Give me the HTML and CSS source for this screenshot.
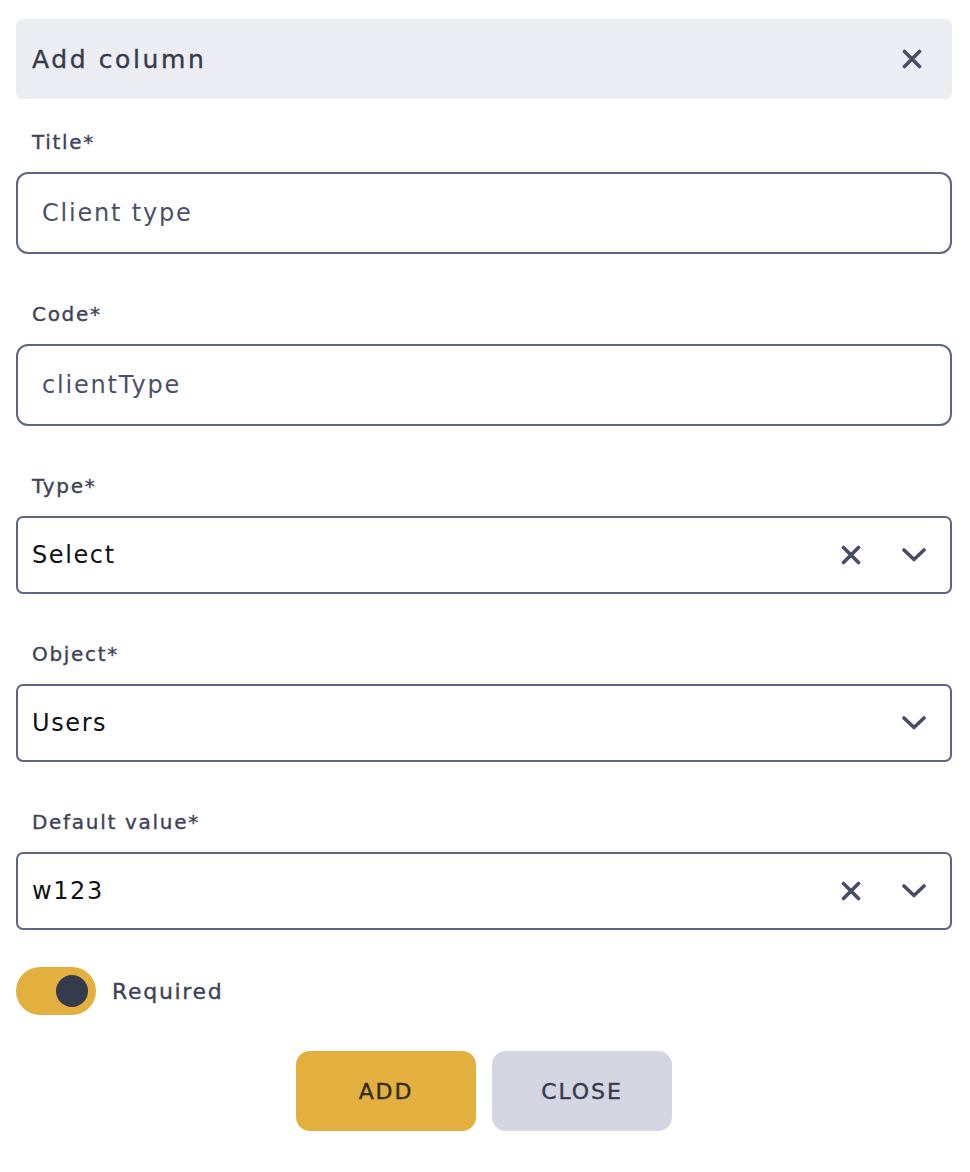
FILE: index.html
```html
<!DOCTYPE html>
<html lang="en">
<head>
    <meta name="viewport" content="width=device-width, initial-scale=1.0">
    <link rel="stylesheet" href="styles.css">
    <title>Add column</title>
</head>

<body>
    <div class="dialog">

        <div class="dialog-header">
            <span class="dialog-title">Add column</span>
            <svg class="icon-x" width="20" height="20" viewBox="0 0 20 20">
                <path d="M2.5 2.5 L17.5 17.5 M17.5 2.5 L2.5 17.5" />
            </svg>
        </div>

        <div class="field first">
            <label class="field-label">Title*</label>
            <div class="text-input">Client type</div>
        </div>

        <div class="field">
            <label class="field-label">Code*</label>
            <div class="text-input">clientType</div>
        </div>

        <div class="field">
            <label class="field-label">Type*</label>
            <div class="select">
                <span class="select-value">Select</span>
                <svg class="icon-x" width="20" height="20" viewBox="0 0 20 20"><path d="M2.5 2.5 L17.5 17.5 M17.5 2.5 L2.5 17.5" /></svg>
                <svg class="icon-chevron" width="24" height="14" viewBox="0 0 24 14"><path d="M2 2 L12 11.5 L22 2" /></svg>
            </div>
        </div>

        <div class="field">
            <label class="field-label">Object*</label>
            <div class="select">
                <span class="select-value">Users</span>
                <svg class="icon-chevron" width="24" height="14" viewBox="0 0 24 14"><path d="M2 2 L12 11.5 L22 2" /></svg>
            </div>
        </div>

        <div class="field">
            <label class="field-label">Default value*</label>
            <div class="select">
                <span class="select-value">w123</span>
                <svg class="icon-x" width="20" height="20" viewBox="0 0 20 20"><path d="M2.5 2.5 L17.5 17.5 M17.5 2.5 L2.5 17.5" /></svg>
                <svg class="icon-chevron" width="24" height="14" viewBox="0 0 24 14"><path d="M2 2 L12 11.5 L22 2" /></svg>
            </div>
        </div>

        <div class="switch-row">
            <div class="switch on"><div class="switch-knob"></div></div>
            <span class="switch-label">Required</span>
        </div>

        <div class="actions">
            <button class="btn btn-primary">ADD</button>
            <button class="btn btn-secondary">CLOSE</button>
        </div>
    </div>
</body>
</html>
```

FILE: styles.css
```css
* {
    box-sizing: border-box;
}

body {
    margin: 0px;
    background-color: white;
    font-family: "DejaVu Sans", "Noto Sans", sans-serif;
    color: #353a4d;
}

/* medium weight, DejaVu only ships book and bold */
.dialog-title, .field-label, .switch-label, .btn {
    -webkit-text-stroke: 0.35px currentColor;
}

.dialog {
    padding: 19px 18px 16px 16px;
}

.dialog-header {
    height: 80px;
    padding: 0px 30px 0px 16px;
    display: flex;
    align-items: center;
    justify-content: space-between;
    background-color: #ecedf2;
    border-radius: 7px;
}

.dialog-title {
    font-size: 25px;
    letter-spacing: 2.6px;
    color: #353a4d;
}

.icon-x path {
    fill: none;
    stroke: #474d66;
    stroke-width: 3.6;
    stroke-linecap: round;
}

.field {
    margin-top: 48px;
}

.field.first {
    margin-top: 31px;
}

.field-label {
    display: block;
    height: 24px;
    line-height: 24px;
    margin: 0px 0px 18px 16px;
    font-size: 20px;
    letter-spacing: 1.7px;
    color: #3d4257;
}

.text-input {
    height: 82px;
    padding: 0px 24px;
    display: flex;
    align-items: center;
    border: 2px solid #5d6585;
    border-radius: 12px;
    font-size: 24px;
    letter-spacing: 1.8px;
    color: #4a5068;
}

.select {
    height: 78px;
    padding: 0px 24px 0px 14px;
    display: flex;
    align-items: center;
    gap: 41px;
    border: 2px solid #5d6585;
    border-radius: 7px;
}

.select-value {
    flex: 1;
    font-size: 24px;
    letter-spacing: 1.6px;
    color: #111111;
}

.icon-chevron path {
    fill: none;
    stroke: #474d66;
    stroke-width: 3.6;
    stroke-linecap: round;
    stroke-linejoin: round;
}

.switch-row {
    margin-top: 37px;
    display: flex;
    align-items: center;
    gap: 16px;
}

.switch {
    width: 80px;
    height: 48px;
    border-radius: 24px;
    background-color: #e3b040;
    display: flex;
    align-items: center;
    padding: 0px 8px;
}

.switch.on {
    justify-content: flex-end;
}

.switch-knob {
    width: 32px;
    height: 32px;
    border-radius: 50%;
    background-color: #353a4d;
}

.switch-label {
    font-size: 22px;
    letter-spacing: 1.7px;
    color: #3d4257;
}

.actions {
    margin-top: 36px;
    display: flex;
    justify-content: center;
    gap: 16px;
}

.btn {
    width: 180px;
    height: 80px;
    border: none;
    border-radius: 14px;
    font-family: inherit;
    font-size: 22px;
    letter-spacing: 1.9px;
}

.btn-primary {
    background-color: #e3b040;
    color: #2d2a1f;
}

.btn-secondary {
    background-color: #d3d5e0;
    color: #353a4d;
}
```
